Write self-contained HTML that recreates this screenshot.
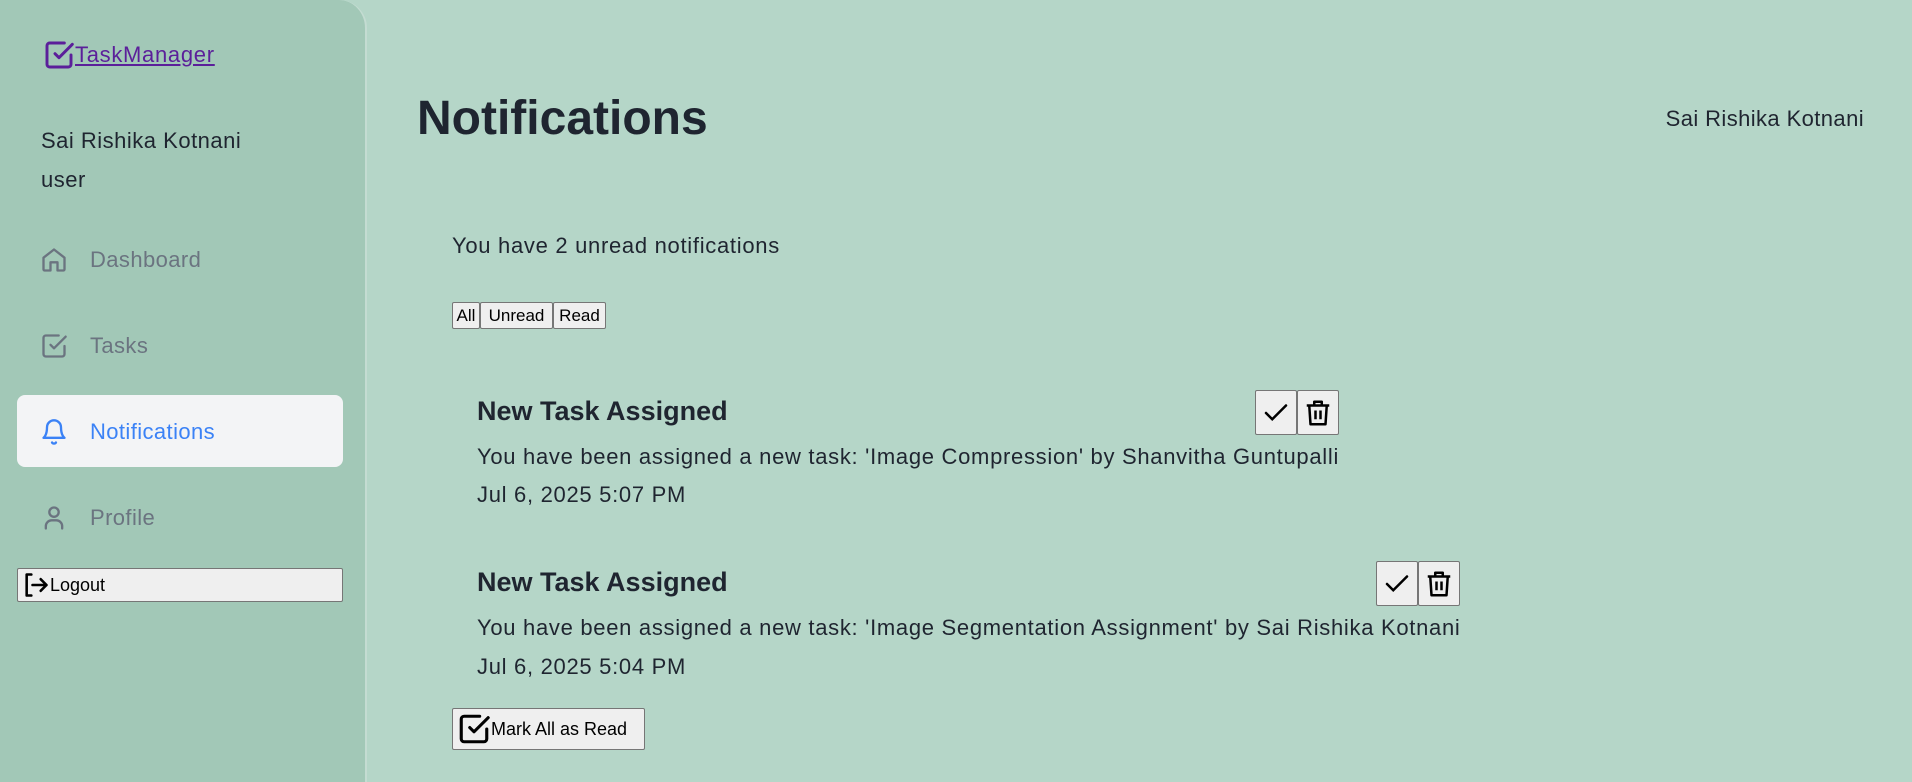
<!DOCTYPE html>
<html><head><meta charset="utf-8"><style>
*{margin:0;padding:0;box-sizing:border-box}
body{width:1912px;height:782px;overflow:hidden;background:#b5d6c8;font-family:"Liberation Sans",sans-serif;color:#1f2530;position:relative}
.a{position:absolute;white-space:nowrap}
.side{position:absolute;left:0;top:0;width:367px;height:782px;background:#a2c8b7;border-right:2px solid #c4dcd2;border-top-right-radius:28px}
.nav{position:absolute;left:40px;font-size:22px;color:#6b7480;display:flex;align-items:center;gap:0;letter-spacing:0.4px}
.nav svg{margin-right:22px}
.btn{position:absolute;background:#efefef;border:1px solid #767676;border-radius:2px;font-size:17px;color:#000;display:flex;align-items:center}
.t{font-size:27px;font-weight:bold;color:#1f2530}
.m{font-size:22px;letter-spacing:0.7px}
</style></head><body>
<div class="side">
 <div class="a" style="left:43px;top:39px;display:flex;align-items:center;color:#5b1f9a;font-size:22px;letter-spacing:0.7px">
  <svg width="32" height="32" viewBox="0 0 24 24" fill="none" stroke="#5b1f9a" stroke-width="2.2" stroke-linecap="round" stroke-linejoin="round"><path d="M9 11l3 3L22 4"/><path d="M21 12v7a2 2 0 0 1-2 2H5a2 2 0 0 1-2-2V5a2 2 0 0 1 2-2h11"/></svg><span style="text-decoration:underline">TaskManager</span></div>
 <div class="a" style="left:41px;top:128px;font-size:22px;letter-spacing:0.5px">Sai Rishika Kotnani</div>
 <div class="a" style="left:41px;top:167px;font-size:22px;letter-spacing:0.5px">user</div>
 <div class="nav" style="top:246px"><svg width="28" height="28" viewBox="0 0 24 24" fill="none" stroke="#6b7480" stroke-width="2" stroke-linejoin="round"><path d="M3 10l9-7 9 7v10a1 1 0 0 1-1 1h-5v-7h-6v7H4a1 1 0 0 1-1-1z"/></svg>Dashboard</div>
 <div class="nav" style="top:332px"><svg width="28" height="28" viewBox="0 0 24 24" fill="none" stroke="#6b7480" stroke-width="2" stroke-linecap="round" stroke-linejoin="round"><path d="M9 11l3 3L22 4"/><path d="M21 12v7a2 2 0 0 1-2 2H5a2 2 0 0 1-2-2V5a2 2 0 0 1 2-2h11"/></svg>Tasks</div>
 <div class="a" style="left:17px;top:395px;width:326px;height:72px;background:#f3f4f6;border-radius:8px"></div>
 <div class="nav" style="top:418px;color:#3b82f6"><svg width="28" height="28" viewBox="0 0 24 24" fill="none" stroke="#3b82f6" stroke-width="2" stroke-linecap="round" stroke-linejoin="round"><path d="M18 8a6 6 0 0 0-12 0c0 7-3 9-3 9h18s-3-2-3-9"/><path d="M13.7 21a2 2 0 0 1-3.4 0"/></svg>Notifications</div>
 <div class="nav" style="top:504px"><svg width="28" height="28" viewBox="0 0 24 24" fill="none" stroke="#6b7480" stroke-width="2" stroke-linecap="round"><circle cx="12" cy="7" r="4"/><path d="M5 21v-2a5 5 0 0 1 5-5h4a5 5 0 0 1 5 5v2"/></svg>Profile</div>
 <div class="btn" style="left:17px;top:568px;width:326px;height:34px;padding-left:4px;font-size:18px"><svg width="28" height="28" viewBox="0 0 24 24" fill="none" stroke="#000" stroke-width="2.2" stroke-linecap="round" stroke-linejoin="round"><path d="M8 3H4v18h4"/><path d="M9 12h12M16 7l5 5-5 5"/></svg>Logout</div>
</div>
<div class="a" style="left:417px;top:91px;font-size:48px;font-weight:bold">Notifications</div>
<div class="a" style="right:48px;top:106px;font-size:22px;letter-spacing:0.4px">Sai Rishika Kotnani</div>
<div class="a m" style="left:452px;top:233px">You have 2 unread notifications</div>
<div class="btn" style="left:452px;top:302px;width:28px;height:27px;justify-content:center">All</div>
<div class="btn" style="left:480px;top:302px;width:73px;height:27px;justify-content:center">Unread</div>
<div class="btn" style="left:553px;top:302px;width:53px;height:27px;justify-content:center">Read</div>

<div class="a t" style="left:477px;top:396px">New Task Assigned</div>
<div class="btn" style="left:1255px;top:390px;width:42px;height:45px;justify-content:center"><svg width="30" height="30" viewBox="0 0 24 24" fill="none" stroke="#000" stroke-width="2" stroke-linecap="round"><path d="M4 12l5 5L20 6"/></svg></div>
<div class="btn" style="left:1297px;top:390px;width:42px;height:45px;justify-content:center"><svg width="30" height="32" viewBox="0 0 24 24" fill="none" stroke="#000" stroke-width="2" stroke-linejoin="round"><path d="M3 6h18M9 6V3h6v3M5 6l1 15h12l1-15M10 10v7M14 10v7"/></svg></div>
<div class="a m" style="left:477px;top:444px">You have been assigned a new task: 'Image Compression' by Shanvitha Guntupalli</div>
<div class="a m" style="left:477px;top:482px">Jul 6, 2025 5:07 PM</div>

<div class="a t" style="left:477px;top:567px">New Task Assigned</div>
<div class="btn" style="left:1376px;top:561px;width:42px;height:45px;justify-content:center"><svg width="30" height="30" viewBox="0 0 24 24" fill="none" stroke="#000" stroke-width="2" stroke-linecap="round"><path d="M4 12l5 5L20 6"/></svg></div>
<div class="btn" style="left:1418px;top:561px;width:42px;height:45px;justify-content:center"><svg width="30" height="32" viewBox="0 0 24 24" fill="none" stroke="#000" stroke-width="2" stroke-linejoin="round"><path d="M3 6h18M9 6V3h6v3M5 6l1 15h12l1-15M10 10v7M14 10v7"/></svg></div>
<div class="a m" style="left:477px;top:615px">You have been assigned a new task: 'Image Segmentation Assignment' by Sai Rishika Kotnani</div>
<div class="a m" style="left:477px;top:654px">Jul 6, 2025 5:04 PM</div>

<div class="btn" style="left:452px;top:708px;width:193px;height:42px;padding-left:4px;font-size:18px"><svg width="34" height="34" viewBox="0 0 24 24" fill="none" stroke="#000" stroke-width="2.2" stroke-linecap="round" stroke-linejoin="round"><path d="M9 11l3 3L22 4"/><path d="M21 12v7a2 2 0 0 1-2 2H5a2 2 0 0 1-2-2V5a2 2 0 0 1 2-2h11"/></svg>Mark All as Read</div>
</body></html>
